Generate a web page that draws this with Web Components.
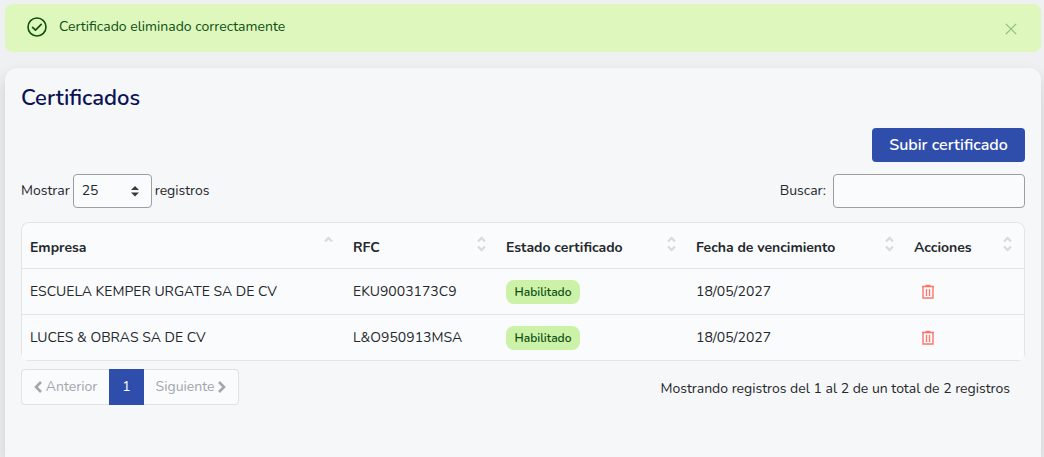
<!DOCTYPE html>
<html lang="es">
<head>
<meta charset="utf-8">
<meta name="viewport" content="width=device-width, initial-scale=1">
<title>Certificados</title>
<style>
  html, body {
    height: 100%;
  }
  body {
    margin: 0;
    box-sizing: border-box;
    padding: 4px 3px 0 5px;
    display: flex;
    flex-direction: column;
    gap: 16px;
    overflow: hidden;
    background: #eff0f2;
    color: #25282b;
    font-family: Nunito, Lato, "Open Sans", sans-serif;
    font-size: 14px;
    line-height: 20px;
  }
  .bar {
    display: flex;
    justify-content: space-between;
    align-items: center;
  }
  .bar.end {
    justify-content: flex-end;
  }
</style>
</head>
<body>
  <alert-banner>Certificado eliminado correctamente</alert-banner>

  <content-card heading="Certificados">
    <div class="bar end"><primary-button>Subir certificado</primary-button></div>
    <div class="bar">
      <length-select></length-select>
      <search-field></search-field>
    </div>
    <cert-table></cert-table>
    <table-footer>Mostrando registros del 1 al 2 de un total de 2 registros</table-footer>
  </content-card>

<script>
const attach = (el, html) => {
  el.attachShadow({ mode: 'open' }).innerHTML = html;
};

class AlertBanner extends HTMLElement {
  constructor() {
    super();
    attach(this, `
      <style>
        :host {
          display: flex;
          align-items: flex-start;
          box-sizing: border-box;
          min-height: 48px;
          padding: 13px 22px 12px;
          border-radius: 8px;
          background: #ddf7bd;
          color: #0e4f12;
        }
        .icon {
          flex: none;
          width: 20px;
          height: 20px;
          margin-right: 12px;
        }
        .text {
          flex: 1;
        }
        button {
          align-self: center;
          display: flex;
          padding: 2px;
          border: none;
          background: none;
          color: #93bb80;
          cursor: pointer;
        }
      </style>
      <svg class="icon" viewBox="0 0 20 20" fill="none" stroke="currentColor" stroke-linecap="round" stroke-linejoin="round">
        <circle cx="10" cy="10" r="9" stroke-width="1.6"/>
        <path d="M5.6 10.3l2.9 2.9 5.7-5.9" stroke-width="1.7"/>
      </svg>
      <span class="text" role="status"><slot></slot></span>
      <button type="button" aria-label="Cerrar">
        <svg width="12" height="12" viewBox="0 0 12 12" stroke="currentColor" stroke-width="1.2"><path d="M.8.8l10.4 10.4M11.2.8L.8 11.2"/></svg>
      </button>
    `);
    this.shadowRoot.querySelector('button').addEventListener('click', () => this.remove());
  }
}

class ContentCard extends HTMLElement {
  constructor() {
    super();
    attach(this, `
      <style>
        :host {
          flex: 1;
          display: block;
          padding: 16px;
          border-radius: 12px 12px 0 0;
          background: #f6f7f9;
          box-shadow: 0 8px 16px rgba(0,0,0,.15);
        }
        h1 {
          margin: 0 0 16px;
          color: #0a1355;
          font-size: 22px;
          font-weight: 600;
          line-height: 28px;
        }
        .body {
          display: flex;
          flex-direction: column;
          gap: 12px;
        }
      </style>
      <h1></h1>
      <div class="body"><slot></slot></div>
    `);
  }

  connectedCallback() {
    this.shadowRoot.querySelector('h1').textContent = this.getAttribute('heading') || '';
  }
}

class PrimaryButton extends HTMLElement {
  constructor() {
    super();
    attach(this, `
      <style>
        :host { display: block; }
        button {
          min-width: 153px;
          height: 34px;
          padding: 0 16px;
          border: none;
          border-radius: 4px;
          background: #2f4dab;
          color: #fff;
          font: 600 16px/24px Nunito, Lato, sans-serif;
          cursor: pointer;
        }
        button:hover { background: #274094; }
      </style>
      <button type="button"><slot></slot></button>
    `);
  }
}

class LengthSelect extends HTMLElement {
  constructor() {
    super();
    attach(this, `
      <style>
        :host { display: block; }
        label {
          display: flex;
          align-items: center;
          gap: 3px;
        }
        .box {
          display: grid;
          align-items: center;
        }
        select, svg { grid-area: 1 / 1; }
        select {
          appearance: none;
          width: 79px;
          height: 34px;
          padding: 0 8px;
          border: 1px solid #9c9ea2;
          border-radius: 4px;
          background: #fafbfd;
          color: inherit;
          font: inherit;
        }
        svg {
          justify-self: end;
          margin-right: 12px;
          pointer-events: none;
        }
      </style>
      <label>Mostrar
        <span class="box">
          <select>
            <option>10</option>
            <option selected>25</option>
            <option>50</option>
            <option>100</option>
          </select>
          <svg width="10" height="12" viewBox="0 0 10 12" fill="#343a40"><path d="M1 5h8L5 1zM1 7.5h8l-4 4z"/></svg>
        </span>
        registros
      </label>
    `);
  }
}

class SearchField extends HTMLElement {
  constructor() {
    super();
    attach(this, `
      <style>
        :host { display: block; }
        label {
          display: flex;
          align-items: center;
          gap: 7px;
        }
        input {
          box-sizing: border-box;
          width: 192px;
          height: 34px;
          padding: 0 8px;
          border: 1px solid #9c9ea2;
          border-radius: 4px;
          background: #fafbfd;
          color: inherit;
          font: inherit;
        }
      </style>
      <label>Buscar: <input type="search"></label>
    `);
  }
}

class SortIcon extends HTMLElement {
  connectedCallback() {
    const down = this.getAttribute('dir') === 'asc' ? '' : '<path d="M1 10.5L4.5 14 8 10.5"/>';
    attach(this, `
      <style>
        :host { display: block; }
        svg { display: block; }
      </style>
      <svg width="9" height="16" viewBox="0 0 9 16" fill="none" stroke="#dadbdd" stroke-width="2.4">
        <path d="M1 5.5L4.5 2 8 5.5"/>${down}
      </svg>
    `);
  }
}

class StatusBadge extends HTMLElement {
  constructor() {
    super();
    attach(this, `
      <style>
        :host {
          display: inline-block;
          box-sizing: border-box;
          min-width: 74px;
          padding: 2px 8px;
          border-radius: 8px;
          background: #ccf2a7;
          color: #0e4f12;
          font-size: 12px;
          font-weight: 600;
          line-height: 20px;
          text-align: center;
          vertical-align: middle;
        }
      </style>
      <slot></slot>
    `);
  }
}

const certificados = [
  { empresa: 'ESCUELA KEMPER URGATE SA DE CV', rfc: 'EKU9003173C9', estado: 'Habilitado', vence: '18/05/2027' },
  { empresa: 'LUCES & OBRAS SA DE CV', rfc: 'L&O950913MSA', estado: 'Habilitado', vence: '18/05/2027' }
];

const columnas = ['Empresa', 'RFC', 'Estado certificado', 'Fecha de vencimiento', 'Acciones'];

class CertTable extends HTMLElement {
  constructor() {
    super();
    const esc = s => s.replace(/&/g, '&amp;');
    attach(this, `
      <style>
        :host {
          --line: 1px solid #e2e4e6;
          display: block;
          margin-top: 2px;
          border-radius: 8px;
          overflow: hidden;
          background: #fafbfd;
        }
        table {
          width: 100%;
          table-layout: fixed;
          border-collapse: separate;
          border-spacing: 0;
        }
        col.rfc { width: 153px; }
        col.estado { width: 190px; }
        col.vence { width: 218px; }
        col.acciones { width: 119px; }
        th, td {
          box-sizing: border-box;
          height: 46px;
          padding: 0 8px;
          border-bottom: var(--line);
          text-align: left;
          vertical-align: middle;
        }
        th {
          height: 47px;
          padding-right: 12px;
          border-top: var(--line);
        }
        th:first-child, td:first-child { border-left: var(--line); }
        th:last-child, td:last-child { border-right: var(--line); }
        th:first-child { border-top-left-radius: 8px; }
        th:last-child { border-top-right-radius: 8px; }
        .head {
          display: flex;
          justify-content: space-between;
          align-items: center;
          padding-top: 4px;
          font-weight: 700;
        }
        sort-icon { margin-bottom: 8px; }
        button {
          display: block;
          padding: 0 7px;
          border: none;
          background: none;
          color: #ff7668;
          cursor: pointer;
        }
        button svg { display: block; }
      </style>
      <table>
        <colgroup><col><col class="rfc"><col class="estado"><col class="vence"><col class="acciones"></colgroup>
        <thead>
          <tr>${columnas.map((c, i) => `<th scope="col"><div class="head">${c}<sort-icon dir="${i ? '' : 'asc'}"></sort-icon></div></th>`).join('')}</tr>
        </thead>
        <tbody>
          ${certificados.map(c => `
            <tr>
              <td>${esc(c.empresa)}</td>
              <td>${esc(c.rfc)}</td>
              <td><status-badge>${c.estado}</status-badge></td>
              <td>${c.vence}</td>
              <td>
                <button type="button" aria-label="Eliminar">
                  <svg width="14" height="16" viewBox="0 0 14 16" fill="none" stroke="currentColor">
                    <path d="M1 2.5h12M4.5 1.5h5" stroke-width="1.4"/>
                    <path d="M2 2.5V14h10V2.5" stroke-width="1.4"/>
                    <path d="M5.5 5v7M8.5 5v7" stroke-width="1.3"/>
                  </svg>
                </button>
              </td>
            </tr>`).join('')}
        </tbody>
      </table>
    `);
  }
}

class TableFooter extends HTMLElement {
  constructor() {
    super();
    attach(this, `
      <style>
        :host {
          display: flex;
          justify-content: space-between;
          align-items: center;
          margin-top: -4px;
          padding-right: 15px;
        }
        nav {
          display: flex;
          box-sizing: border-box;
          height: 36px;
        }
        a {
          box-sizing: border-box;
          display: flex;
          align-items: center;
          justify-content: center;
          gap: 4px;
          border: 1px solid #e0e2e4;
          background: #fafbfd;
          color: #a3a6aa;
          text-decoration: none;
        }
        .prev {
          width: 88px;
          border-right: none;
          border-radius: 4px 0 0 4px;
        }
        .next {
          width: 95px;
          border-left: none;
          border-radius: 0 4px 4px 0;
        }
        .current {
          width: 35px;
          border-color: #2f4dab;
          background: #2f4dab;
          color: #fff;
        }
        .info { padding-top: 4px; }
      </style>
      <nav aria-label="Paginación">
        <a class="prev" href="#" aria-disabled="true"><svg width="8" height="12" viewBox="0 0 8 12" fill="none" stroke="currentColor" stroke-width="2.6"><path d="M7 1L2 6l5 5"/></svg>Anterior</a>
        <a class="current" href="#" aria-current="page">1</a>
        <a class="next" href="#" aria-disabled="true">Siguiente<svg width="8" height="12" viewBox="0 0 8 12" fill="none" stroke="currentColor" stroke-width="2.6"><path d="M1 1l5 5-5 5"/></svg></a>
      </nav>
      <span class="info"><slot></slot></span>
    `);
  }
}

customElements.define('alert-banner', AlertBanner);
customElements.define('content-card', ContentCard);
customElements.define('primary-button', PrimaryButton);
customElements.define('length-select', LengthSelect);
customElements.define('search-field', SearchField);
customElements.define('sort-icon', SortIcon);
customElements.define('status-badge', StatusBadge);
customElements.define('cert-table', CertTable);
customElements.define('table-footer', TableFooter);
</script>
</body>
</html>
